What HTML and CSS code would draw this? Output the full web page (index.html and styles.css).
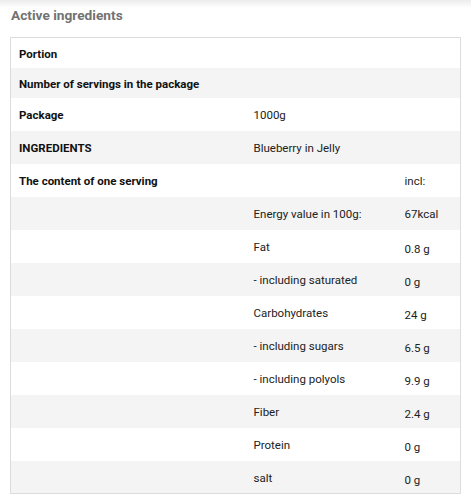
FILE: index.html
```html
<!DOCTYPE html>
<html>
<head>
<meta charset="utf-8">
<link rel="stylesheet" href="styles.css">
</head>
<body>
<div class="topshade"></div>
<h2 class="title">Active ingredients</h2>
<table class="nutri">
  <colgroup><col class="c1"><col class="c2"><col class="c3"></colgroup>
  <tr class="short"><td class="lbl">Portion</td><td></td><td></td></tr>
  <tr class="short"><td class="lbl">Number of servings in the package</td><td></td><td></td></tr>
  <tr><td class="lbl">Package</td><td class="v2">1000g</td><td></td></tr>
  <tr><td class="lbl">INGREDIENTS</td><td class="v2">Blueberry in Jelly</td><td></td></tr>
  <tr><td class="lbl">The content of one serving</td><td></td><td class="v3">incl:</td></tr>
  <tr><td></td><td class="v2">Energy value in 100g:</td><td class="v3">67kcal</td></tr>
  <tr><td></td><td class="v2">Fat</td><td class="v3 low">0.8 g</td></tr>
  <tr><td></td><td class="v2">- including saturated</td><td class="v3 low">0 g</td></tr>
  <tr><td></td><td class="v2">Carbohydrates</td><td class="v3 low">24 g</td></tr>
  <tr><td></td><td class="v2">- including sugars</td><td class="v3 low">6.5 g</td></tr>
  <tr><td></td><td class="v2">- including polyols</td><td class="v3 low">9.9 g</td></tr>
  <tr><td></td><td class="v2">Fiber</td><td class="v3 low">2.4 g</td></tr>
  <tr><td></td><td class="v2">Protein</td><td class="v3 low">0 g</td></tr>
  <tr><td></td><td class="v2">salt</td><td class="v3 low">0 g</td></tr>
</table>
</body>
</html>
```
FILE: styles.css
```css
html, body {
  margin: 0;
  padding: 0;
  background: #fff;
  font-family: Roboto, "Liberation Sans", sans-serif;
}
.topshade {
  height: 8px;
  background: linear-gradient(#ececec, #ffffff);
}
.title {
  margin: 0;
  padding: 0 0 0 11px;
  font-size: 13.7px;
  line-height: 14px;
  font-weight: 700;
  color: #727272;
}
.nutri {
  margin: 15px 0 0 10px;
  width: 450px;
  border-collapse: collapse;
  border: 1px solid #dcdcdc;
  table-layout: fixed;
  font-size: 11.5px;
  color: #111;
}
.c1 { width: 234px; }
.c2 { width: 152px; }
.c3 { width: 64px; }
.nutri tr { height: 33px; }
.nutri tr.short { height: 30px; }
.nutri tr:nth-child(even) { background: #f4f4f4; }
.nutri td {
  padding: 2px 8px 0;
  vertical-align: middle;
  line-height: 14px;
}
.nutri td.lbl { font-weight: 700; }
.nutri td.v2 { color: #222; padding-left: 9px; }
.nutri td.v3 { color: #222; }
.nutri td.low { padding-top: 6px; }
```
